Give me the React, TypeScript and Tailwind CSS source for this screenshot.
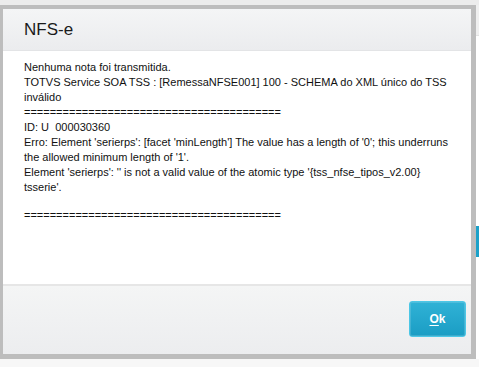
export default function App() {
  const sep = "=".repeat(40);
  return (
    <div
      className="w-[479px] h-[367px] bg-[#f7f7f7] overflow-hidden flex flex-col"
      style={{ fontFamily: '"Liberation Sans", Arial, sans-serif' }}
    >
      <div className="h-[5px] bg-[#ececec] shrink-0" />
      <div className="flex">
        <div className="w-[476px] h-[354px] border-l-[3px] border-t-4 border-r-[5px] border-b-[5px] border-[#bdbdbd] flex flex-col bg-white">
          <div className="h-[42px] shrink-0 bg-gradient-to-b from-[#f4f5f6] to-[#ebecee] border-b border-[#e3e4e6] flex items-center pl-[21px]">
            <span className="text-[17px] text-[#1a1a1a]">NFS-e</span>
          </div>
          <div className="flex-1 px-[21px] pt-[9px] text-[11px] leading-[15px] text-[#111]">
            <div>Nenhuma nota foi transmitida.</div>
            <div>
              TOTVS Service SOA TSS : [RemessaNFSE001] 100 - SCHEMA do XML único do TSS inválido
            </div>
            <div>{sep}</div>
            <div>ID: U&nbsp;&nbsp;000030360</div>
            <div>
              Erro: Element 'serierps': [facet 'minLength'] The value has a length of '0'; this underruns the
              allowed minimum length of '1'.
            </div>
            <div>
              {"Element 'serierps': '' is not a valid value of the atomic type '{tss_nfse_tipos_v2.00} tsserie'."}
            </div>
            <div className="h-[13px]" />
            <div>{sep}</div>
          </div>
          <div className="h-[70px] shrink-0 border-t-2 border-[#e6e6e6] bg-gradient-to-b from-[#f4f5f5] to-[#ecedef] flex items-start justify-end pt-[15px] pr-[5px]">
            <button className="w-[57px] h-[36px] rounded-[3px] border border-[#4cc7e6] bg-gradient-to-b from-[#2fb2d6] to-[#1a9dc4] text-white text-[12px] font-bold flex items-center justify-center shadow-[inset_0_0_0_1px_rgba(255,255,255,0.15)]">
              <span className="underline underline-offset-2">O</span>k
            </button>
          </div>
        </div>
        <div className="w-[3px] flex flex-col">
          <div className="h-[31px] bg-[#efefef] border-b border-[#e2e2e2]" />
          <div className="h-[190px] bg-white" />
          <div className="h-[31px] bg-[#1ca1c9]" />
          <div className="flex-1 bg-white" />
        </div>
      </div>
    </div>
  );
}
